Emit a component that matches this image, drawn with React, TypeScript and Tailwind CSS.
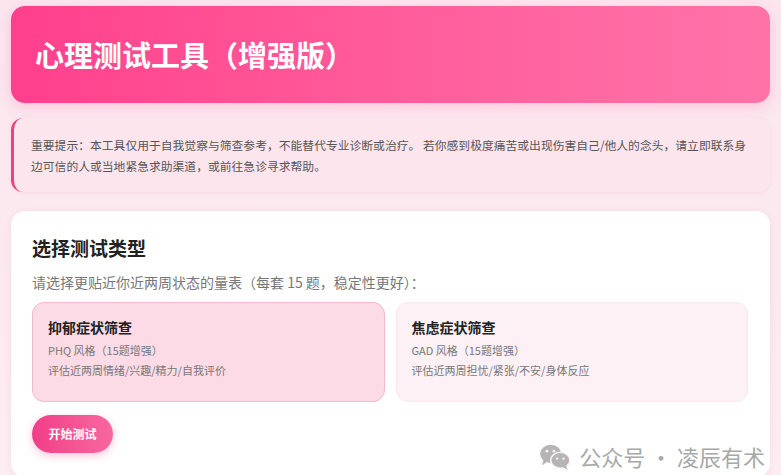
import React from "react";

const font = { fontFamily: '"Noto Sans CJK SC", "Noto Sans", sans-serif' };

const OptionCard = ({ title, style, desc, active }: any) => (
  <div
    className={
      "h-[100px] rounded-[12px] border px-[15px] pt-[14px] " +
      (active
        ? "bg-[#fddbe6] border-[#f4b8cd]"
        : "bg-[#fdf1f5] border-[#fbe6ee]")
    }
  >
    <div className="text-[14px] font-bold text-[#222] leading-[20px]">{title}</div>
    <div className="mt-[3px] text-[11px] leading-[20px] text-[#777]">{style}</div>
    <div className="text-[11px] leading-[20px] text-[#777]">{desc}</div>
  </div>
);

const WeChat = () => (
  <svg width="32" height="28" viewBox="0 0 30 26" fill="#b5b5b5">
    <ellipse cx="11" cy="10" rx="10" ry="8.5" />
    <path d="M4 16 L3 21 L8 17 Z" />
    <ellipse cx="20" cy="16" rx="9" ry="7.5" fill="#b5b5b5" stroke="#fdf3f6" strokeWidth="1.5" />
    <path d="M25 21 L27 25 L21 22 Z" />
    <circle cx="7.5" cy="7.5" r="1.3" fill="#fdf3f6" />
    <circle cx="14" cy="7.5" r="1.3" fill="#fdf3f6" />
    <circle cx="17" cy="14.5" r="1.1" fill="#fdf3f6" />
    <circle cx="23" cy="14.5" r="1.1" fill="#fdf3f6" />
  </svg>
);

const App: React.FC = () => {
  return (
    <div
      className="relative w-full min-h-screen bg-gradient-to-b from-[#fbe6ee] to-[#fdeef3] px-[11px] pt-[6px] pb-[20px]"
      style={font}
    >
      <div className="h-[97px] rounded-[14px] bg-gradient-to-r from-[#ff3f8c] to-[#ff73a9] shadow-[0_4px_14px_rgba(255,90,150,0.25)] flex items-center px-[24px]">
        <h1 className="text-[29px] font-bold text-white">心理测试工具（增强版）</h1>
      </div>

      <div className="mt-[15px] rounded-[12px] border-l-[3px] border-[#e8447f] bg-[#fde5ee] px-[17px] py-[16px] shadow-[0_1px_4px_rgba(230,150,180,0.2)]">
        <p className="text-[11.8px] leading-[21px] text-[#555]">
          重要提示：本工具仅用于自我觉察与筛查参考，不能替代专业诊断或治疗。 若你感到极度痛苦或出现伤害自己/他人的念头，请立即联系身边可信的人或当地紧急求助渠道，或前往急诊寻求帮助。
        </p>
      </div>

      <div className="mt-[19px] rounded-[14px] bg-white pl-[21px] pr-[22px] pt-[23px] pb-[24px] shadow-[0_2px_10px_rgba(230,150,180,0.2)]">
        <h2 className="text-[19px] font-bold text-[#222] leading-[28px]">选择测试类型</h2>
        <p className="mt-[10px] text-[14px] text-[#777] leading-[20px]">
          请选择更贴近你近两周状态的量表（每套 15 题，稳定性更好）：
        </p>
        <div className="mt-[10px] grid grid-cols-2 gap-[11px]">
          <OptionCard title="抑郁症状筛查" style="PHQ 风格（15题增强）" desc="评估近两周情绪/兴趣/精力/自我评价" active />
          <OptionCard title="焦虑症状筛查" style="GAD 风格（15题增强）" desc="评估近两周担忧/紧张/不安/身体反应" />
        </div>
        <button className="mt-[13px] h-[38px] w-[81px] rounded-full bg-gradient-to-r from-[#f23d88] to-[#f7679f] text-[12px] font-bold text-white shadow-[0_3px_8px_rgba(240,70,140,0.3)]">
          开始测试
        </button>
      </div>

      <div className="absolute right-[16px] top-[440px] flex items-center gap-[8px] text-[22px] text-[#a8a8a8]">
        <WeChat />
        <span>公众号 · 凌辰有术</span>
      </div>
    </div>
  );
};

export default App;
